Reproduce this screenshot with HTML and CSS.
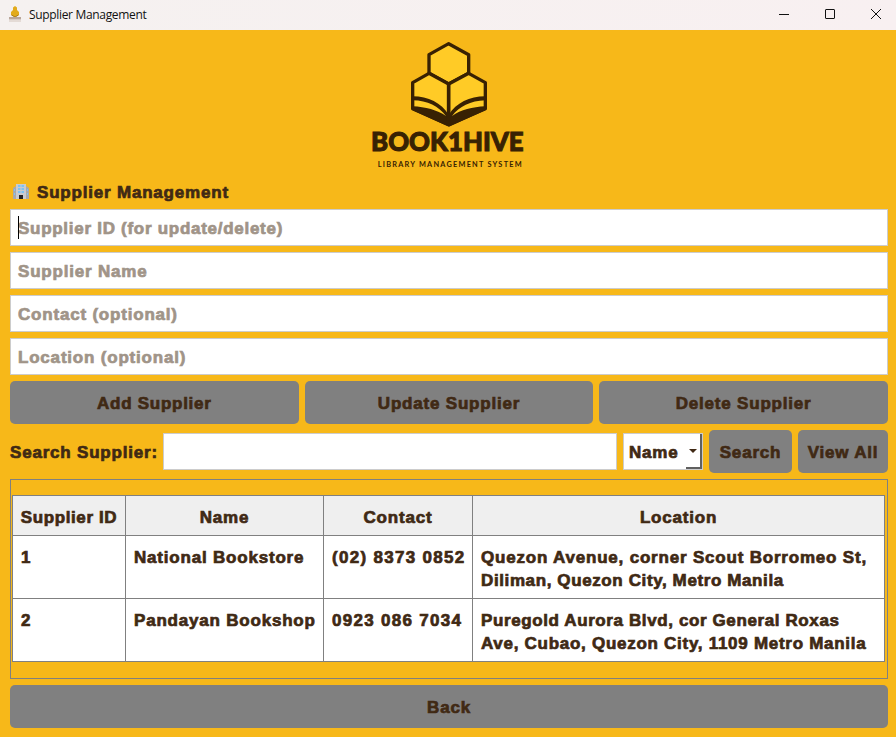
FILE: index.html
```html
<!DOCTYPE html>
<html lang="en">
<head>
<meta charset="utf-8">
<title>Supplier Management</title>
<link rel="stylesheet" href="styles.css">
</head>
<body>
<div class="window">
  <header class="titlebar">
    <svg class="app-icon" width="14" height="18" viewBox="0 0 14 18">
      <path d="M7 1L9 2.500V5L11 7V10L7 12L3 10V7L5 5V2.500Z" fill="#e2ab1c"/>
      <path d="M3.500 10L7 12L10.500 10" fill="none" stroke="#a87914"/>
      <path d="M1 12H13V14.500H1Z" fill="#b9a79b"/>
      <path d="M1 16H13" stroke="#ded3ce" stroke-width="1.500"/>
    </svg>
    <span class="caption">Supplier Management</span>
    <div class="controls">
      <svg width="10" height="10" viewBox="0 0 10 10"><path d="M0 5.500H10"/></svg>
      <svg width="10" height="10" viewBox="0 0 10 10"><rect x=".5" y=".5" width="9" height="9" rx=".5"/></svg>
      <svg width="10" height="10" viewBox="0 0 10 10"><path d="M0 0L10 10M10 0L0 10"/></svg>
    </div>
  </header>
  <main class="content">
    <svg class="logo" width="176" height="140" viewBox="0 0 528 420">
      <g fill="#ffcb26" stroke="#382103" stroke-width="10" stroke-linejoin="round">
        <path d="M266 29L326 62V118L266 150L207 118V62Z"/>
        <path d="M207 118L158 146V224L266 272L376 224V146L326 118L266 150Z"/>
      </g>
      <path d="M158 187C205 187 244 207 266 242C289 207 328 187 376 187V199C331 200 298 218 276 246C303 227 337 219 376 217V229L267 278L158 229V217C196 219 232 228 258 246C236 217 203 200 158 199Z" fill="#382103"/>
      <path d="M266 150V260" stroke="#382103" stroke-width="11"/>
      <text class="brand" x="33" y="351" textLength="458" lengthAdjust="spacingAndGlyphs">BOOK1HIVE</text>
      <text class="tagline" x="53" y="398" textLength="432" lengthAdjust="spacing">LIBRARY MANAGEMENT SYSTEM</text>
    </svg>
    <h1 class="heading">
      <svg width="16" height="17" viewBox="0 0 16 17">
        <path d="M0 5L3 3V16H0ZM13 3L16 5V16H13Z" fill="#a9a9ab"/>
        <path d="M3 1H13V16H3Z" fill="#c9cbd0"/>
        <path d="M5 2H7.500V4H5ZM8.500 2H11V4H8.500ZM5 5H7.500V7H5ZM8.500 5H11V7H8.500ZM5 8H7.500V10H5ZM8.500 8H11V10H8.500ZM1 6H2V8H1ZM14 6H15V8H14ZM1 10H2V12H1ZM14 10H15V12H14Z" fill="#7cc4f5"/>
        <path d="M6 12H10V16H6Z" fill="#242326"/>
      </svg>
      <span>Supplier Management</span>
    </h1>
    <div class="field focused"><span class="snug">Supplier ID (for update/delete)</span></div>
    <div class="field"><span>Supplier Name</span></div>
    <div class="field"><span>Contact (optional)</span></div>
    <div class="field"><span>Location (optional)</span></div>
    <div class="actions">
      <button class="snug">Add Supplier</button>
      <button>Update Supplier</button>
      <button>Delete Supplier</button>
    </div>
    <div class="search">
      <label>Search Supplier:</label>
      <div class="field query"></div>
      <div class="combo"><span>Name</span><i class="drop"></i></div>
      <button class="find">Search</button>
      <button class="all">View All</button>
    </div>
    <div class="frame">
      <table>
        <colgroup><col class="c-id"><col class="c-name"><col class="c-contact"><col class="c-location"></colgroup>
        <thead><tr><th class="tight">Supplier ID</th><th>Name</th><th>Contact</th><th>Location</th></tr></thead>
        <tbody>
          <tr><td>1</td><td>National Bookstore</td><td class="phone">(02) 8373 0852</td><td>Quezon Avenue, corner Scout Borromeo St,<br><span class="tight">Diliman, Quezon City, Metro Manila</span></td></tr>
          <tr><td>2</td><td>Pandayan Bookshop</td><td class="phone">0923 086 7034</td><td><span class="tight">Puregold Aurora Blvd, cor General Roxas</span><br><span class="snug">Ave, Cubao, Quezon City, 1109 Metro Manila</span></td></tr>
        </tbody>
      </table>
    </div>
    <button class="back">Back</button>
  </main>
</div>
</body>
</html>
```
FILE: styles.css
```css
* { box-sizing: border-box; }
body { margin: 0; background: #f7b819; }
.window {
  width: 896px;
  height: 737px;
  overflow: hidden;
  color: #402914;
  font: bold 17px/23px "Liberation Sans", Arial, sans-serif;
  letter-spacing: 0.8px;
  -webkit-text-stroke: 0.7px currentColor;
}
.titlebar {
  display: flex;
  align-items: center;
  height: 30px;
  padding: 0 15px 0 8px;
  background: linear-gradient(90deg, #f5f1f0, #f8f0f1);
}
.caption {
  margin-left: 7px;
  color: #111;
  font: 12px/16px "Open Sans", "Noto Sans", sans-serif;
  letter-spacing: -0.33px;
  -webkit-text-stroke: 0;
}
.app-icon { margin-top: -3px; }
.controls {
  display: flex;
  gap: 36px;
  margin: -2px 0 0 auto;
}
.controls svg { fill: none; stroke: #111; overflow: visible; }
.content {
  display: flex;
  flex-direction: column;
  gap: 6px;
  padding: 4px 8px 0 10px;
}
.logo { align-self: center; margin-left: -2px; -webkit-text-stroke: 0; }
.brand {
  font: 900 77px Lato, sans-serif;
  fill: #382103;
  stroke: #382103;
  stroke-width: 3px;
  letter-spacing: 0;
}
.tagline { font: 700 22px Lato, sans-serif; fill: #382103; letter-spacing: 0; }
.heading {
  display: flex;
  align-items: center;
  gap: 8px;
  height: 23px;
  margin: 0;
  padding-left: 3px;
  font: inherit;
}
.heading span, .field span, .search label { padding-top: 2px; }
.field {
  position: relative;
  display: flex;
  align-items: center;
  height: 37px;
  padding: 0 7px;
  background: #fff;
  border: 1px solid #ccc;
  color: #a09488;
}
.focused::before {
  content: "";
  position: absolute;
  left: 7px;
  top: 6px;
  width: 1px;
  height: 23px;
  background: #000;
}
button {
  height: 43px;
  padding: 2px 0 0;
  border: 0;
  border-radius: 5px;
  background: #808080;
  color: inherit;
  font: inherit;
  letter-spacing: inherit;
}
.snug { letter-spacing: 0.72px; }
.tight { letter-spacing: 0.61px; }
.phone { letter-spacing: 1.3px; }
.actions { display: grid; grid-template-columns: repeat(3, 1fr); gap: 6px; }
.search { display: flex; align-items: center; gap: 6px; }
.search label { width: 147px; white-space: nowrap; }
.query { flex: 1; }
.combo {
  display: flex;
  justify-content: space-between;
  width: 80px;
  height: 37px;
  padding-left: 5px;
  background: #fff;
  border: 1px solid #ccc;
  line-height: 37px;
}
.drop {
  width: 16px;
  border-right: 2px solid #606060;
  border-bottom: 2px solid #606060;
  display: flex;
  justify-content: center;
  align-items: center;
}
.drop::before {
  content: "";
  border: 4px solid transparent;
  border-top-color: #402914;
  border-bottom: 0;
}
.find { width: 83px; }
.all { width: 90px; }
.frame { height: 200px; padding: 15px 2px 0 1px; border: 1px solid #808080; }
table {
  width: 873px;
  table-layout: fixed;
  border-collapse: separate;
  border-spacing: 0;
  border: 0 solid #808080;
  border-width: 1px 0 0 1px;
  background: #fff;
}
th, td { border: 0 solid #808080; border-width: 0 1px 1px 0; white-space: nowrap; }
th { height: 40px; padding: 3px 0 0; background: #efefef; text-align: center; font-weight: bold; }
td { height: 63px; padding: 10px 0 0 8px; vertical-align: top; }
.c-id { width: 113px; }
.c-name { width: 198px; }
.c-contact { width: 149px; }
.c-location { width: 412px; }
```
